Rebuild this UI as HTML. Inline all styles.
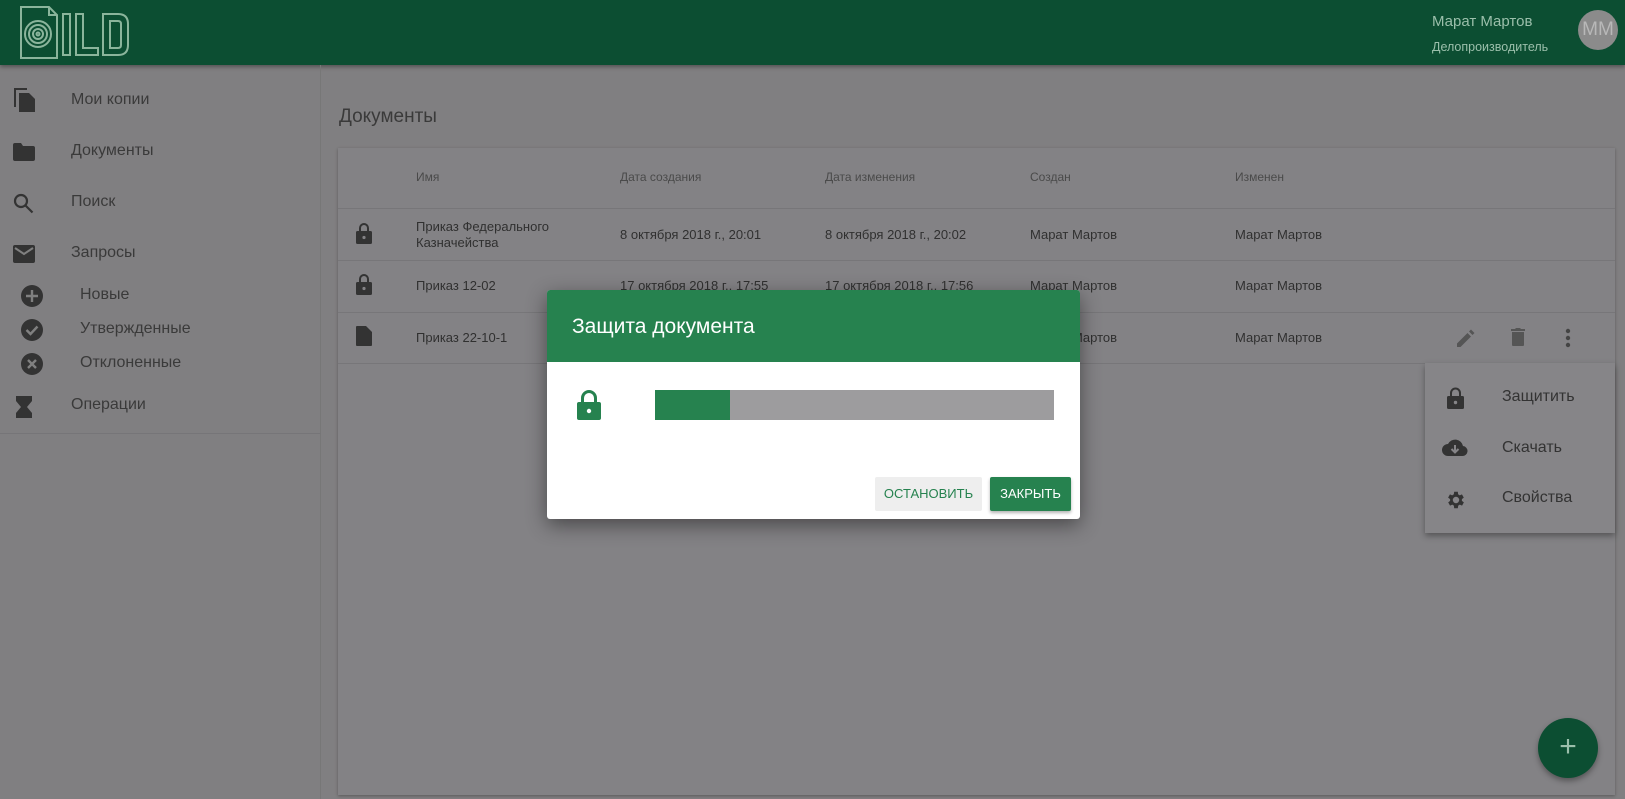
<!DOCTYPE html>
<html><head><meta charset="utf-8"><style>
*{margin:0;padding:0;box-sizing:border-box}
body{width:1625px;height:799px;overflow:hidden;background:#807f81;font-family:"Liberation Sans",sans-serif;position:relative;color:#333}
.hdr{position:absolute;left:0;top:0;width:1625px;height:65px;background:#0c4e32;box-shadow:0 2px 4px rgba(0,0,0,.35)}
.side{position:absolute;left:0;top:65px;width:321px;height:734px;border-right:1px solid #777}
.si{position:absolute;font-size:16px;color:#3a3a3a}
.ic{position:absolute}
.card{position:absolute;left:338px;top:148px;width:1277px;height:647px;background:#838285;box-shadow:0 1px 3px rgba(0,0,0,.3)}
.t{position:absolute;font-size:13px;color:#303030;white-space:nowrap}
.th{position:absolute;font-size:12px;color:#4a4a4a}
.ln{position:absolute;left:338px;width:1277px;height:1px;background:#777679}
.menu{position:absolute;left:1425px;top:363px;width:190px;height:170px;background:#868588;box-shadow:0 3px 6px rgba(0,0,0,.35)}
.mi{position:absolute;left:77px;font-size:16px;color:#333}
.dlg{position:absolute;left:547px;top:290px;width:533px;height:229px;background:#fff;border-radius:3px;box-shadow:0 6px 20px rgba(0,0,0,.45);overflow:hidden}
</style></head><body>
<div class="hdr">
<svg width="130" height="60" style="position:absolute;left:16px;top:4px" fill="none" stroke="#8bb59c" stroke-width="2">
<path d="M5 3h28l8 8v43H5z"/><path d="M33 3v8h8"/>
<circle cx="22" cy="30" r="13"/><circle cx="22" cy="30" r="9"/><circle cx="22" cy="30" r="5"/><circle cx="22" cy="30" r="1.5"/>
<path d="M47 10h7v41h-7z"/><path d="M60 10h7v34h15v7H60z"/><path d="M87 10h15q10 0 10 10v21q0 10-10 10H87z M94 17v27h8q3 0 3-3V20q0-3-3-3z"/>
</svg>
<div style="position:absolute;left:1432px;top:13px;font-size:15px;color:#9bbfab">Марат Мартов</div>
<div style="position:absolute;left:1432px;top:40px;font-size:12.5px;color:#9bbfab">Делопроизводитель</div>
<div style="position:absolute;left:1578px;top:10px;width:40px;height:40px;border-radius:50%;background:#8b8b8b;color:#b8b8b8;font-size:19px;line-height:40px;text-align:center">ММ</div>
</div>
<div class="side">
<svg class="ic" style="left:13px;top:23px" width="22" height="24" viewBox="0 0 22 24" fill="#333"><path d="M1 0h13v2H3v17H1z"/><path d="M6 5h10l6 6v13H6z"/></svg>
<div class="si" style="left:71px;top:26px">Мои копии</div>
<svg class="ic" style="left:13px;top:78px" width="22" height="18" fill="#333"><path d="M0 2q0-2 2-2h6l2 3h10q2 0 2 2v11q0 2-2 2H2q-2 0-2-2z"/></svg>
<div class="si" style="left:71px;top:77px">Документы</div>
<svg class="ic" style="left:13px;top:128px" width="22" height="22" fill="none" stroke="#333" stroke-width="2.2"><circle cx="8" cy="8" r="6"/><path d="M12.5 12.5l7 7"/></svg>
<div class="si" style="left:71px;top:128px">Поиск</div>
<svg class="ic" style="left:13px;top:180px" width="22" height="18"><rect width="22" height="18" rx="2" fill="#333"/><path d="M2 3l9 6 9-6" fill="none" stroke="#808080" stroke-width="2"/></svg>
<div class="si" style="left:71px;top:179px">Запросы</div>
<svg class="ic" style="left:21px;top:220px" width="22" height="22"><circle cx="11" cy="11" r="11" fill="#333"/><path d="M11 5v12M5 11h12" stroke="#808080" stroke-width="2.4"/></svg>
<div class="si" style="left:80px;top:221px">Новые</div>
<svg class="ic" style="left:21px;top:254px" width="22" height="22"><circle cx="11" cy="11" r="11" fill="#333"/><path d="M5.5 11l4 4 7-7.5" fill="none" stroke="#808080" stroke-width="2.4"/></svg>
<div class="si" style="left:80px;top:255px">Утвержденные</div>
<svg class="ic" style="left:21px;top:288px" width="22" height="22"><circle cx="11" cy="11" r="11" fill="#333"/><path d="M7 7l8 8M15 7l-8 8" stroke="#808080" stroke-width="2.4"/></svg>
<div class="si" style="left:80px;top:289px">Отклоненные</div>
<svg class="ic" style="left:16px;top:331px" width="16" height="22" fill="#333"><path d="M0 0h16v5l-5 6 5 6v5H0v-5l5-6-5-6z"/></svg>
<div class="si" style="left:71px;top:331px">Операции</div>
<div style="position:absolute;left:0;top:368px;width:321px;height:1px;background:#767578"></div>
</div>
<div style="position:absolute;left:339px;top:106px;font-size:19px;color:#3a3a3a">Документы</div>
<div class="card"></div>
<div class="th" style="left:416px;top:170px">Имя</div>
<div class="th" style="left:620px;top:170px">Дата создания</div>
<div class="th" style="left:825px;top:170px">Дата изменения</div>
<div class="th" style="left:1030px;top:170px">Создан</div>
<div class="th" style="left:1235px;top:170px">Изменен</div>
<div class="ln" style="top:208px"></div><div class="ln" style="top:260px"></div><div class="ln" style="top:312px"></div><div class="ln" style="top:363px"></div>
<svg class="ic" style="left:356px;top:222px" width="16" height="22" fill="#333"><path d="M3 9V6a5 5 0 0110 0v3h-2V6a3 3 0 00-6 0v3z"/><rect y="9" width="16" height="13" rx="1.5"/><circle cx="8" cy="15.5" r="1.6" fill="#838285"/></svg>
<div class="t" style="left:416px;top:219px;line-height:16px">Приказ Федерального<br>Казначейства</div>
<div class="t" style="left:620px;top:227px">8 октября 2018 г., 20:01</div>
<div class="t" style="left:825px;top:227px">8 октября 2018 г., 20:02</div>
<div class="t" style="left:1030px;top:227px">Марат Мартов</div>
<div class="t" style="left:1235px;top:227px">Марат Мартов</div>
<svg class="ic" style="left:356px;top:273px" width="16" height="22" fill="#333"><path d="M3 9V6a5 5 0 0110 0v3h-2V6a3 3 0 00-6 0v3z"/><rect y="9" width="16" height="13" rx="1.5"/><circle cx="8" cy="15.5" r="1.6" fill="#838285"/></svg>
<div class="t" style="left:416px;top:278px">Приказ 12-02</div>
<div class="t" style="left:620px;top:278px">17 октября 2018 г., 17:55</div>
<div class="t" style="left:825px;top:278px">17 октября 2018 г., 17:56</div>
<div class="t" style="left:1030px;top:278px">Марат Мартов</div>
<div class="t" style="left:1235px;top:278px">Марат Мартов</div>
<svg class="ic" style="left:356px;top:326px" width="16" height="20" fill="#333"><path d="M1 0h9l6 6v13q0 1-1 1H1q-1 0-1-1V1q0-1 1-1z"/></svg>
<div class="t" style="left:416px;top:330px">Приказ 22-10-1</div>
<div class="t" style="left:1030px;top:330px">Марат Мартов</div>
<div class="t" style="left:1235px;top:330px">Марат Мартов</div>
<svg class="ic" style="left:1457px;top:329px" width="18" height="18" fill="#555"><path d="M0 14.5V18h3.5L14 7.5 10.5 4z M15.5 6l2-2-3.5-3.5-2 2z"/></svg>
<svg class="ic" style="left:1511px;top:328px" width="14" height="18" fill="#555"><path d="M1 4h12v13q0 1-1 1H2q-1 0-1-1z M0 1h4l1-1h4l1 1h4v2H0z"/></svg>
<svg class="ic" style="left:1565px;top:328px" width="6" height="20" fill="#444"><circle cx="3" cy="3" r="2.2"/><circle cx="3" cy="10" r="2.2"/><circle cx="3" cy="17" r="2.2"/></svg>
<div class="menu">
<svg class="ic" style="left:22px;top:24px" width="17" height="22" fill="#333"><path d="M3 9V6a5.5 5.5 0 0111 0v3h-2V6a3.5 3.5 0 00-7 0v3z"/><rect y="9" width="17" height="13" rx="1.5"/><circle cx="8.5" cy="15.5" r="1.7" fill="#868588"/></svg>
<div class="mi" style="top:25px">Защитить</div>
<svg class="ic" style="left:17px;top:76px" width="26" height="18"><path d="M21 7A8 8 0 006 5 6 6 0 006 17h14a5 5 0 001-10z" fill="#333"/><path d="M13 6v7M9.5 10l3.5 3.5 3.5-3.5" fill="none" stroke="#868588" stroke-width="2"/></svg>
<div class="mi" style="top:76px">Скачать</div>
<svg class="ic" style="left:20px;top:126px" width="22" height="22" viewBox="0 0 24 24" fill="#333"><path d="M19.4 13a7.5 7.5 0 000-2l2.1-1.6-2-3.5-2.5 1a7 7 0 00-1.7-1L15 3h-4l-.4 2.9a7 7 0 00-1.7 1l-2.5-1-2 3.5L6.6 11a7.5 7.5 0 000 2l-2.1 1.6 2 3.5 2.5-1a7 7 0 001.7 1L11 21h4l.4-2.9a7 7 0 001.7-1l2.5 1 2-3.5zM13 15.5a3.5 3.5 0 110-7 3.5 3.5 0 010 7z" transform="translate(-1 0)"/></svg>
<div class="mi" style="top:126px">Свойства</div>
</div>
<div style="position:absolute;left:1538px;top:718px;width:60px;height:60px;border-radius:50%;background:#0c4e32;box-shadow:0 3px 6px rgba(0,0,0,.35);color:#9bbfab;font-size:30px;line-height:58px;text-align:center">+</div>
<div class="dlg">
<div style="height:72px;background:#26824f;color:#fff;font-size:21px;padding:25px 0 0 25px">Защита документа</div>
<svg class="ic" style="left:30px;top:100px" width="24" height="30" fill="#26824f"><path d="M4 12V8a8 8 0 0116 0v4h-3V8a5 5 0 00-10 0v4z"/><rect y="12" width="24" height="18" rx="2"/><circle cx="12" cy="21" r="2.2" fill="#fff"/></svg>
<div style="position:absolute;left:108px;top:100px;width:399px;height:30px;background:#9d9c9e"><div style="width:75px;height:30px;background:#26824f"></div></div>
<div style="position:absolute;left:328px;top:187px;width:107px;height:34px;background:#eeeeee;border-radius:2px;color:#26824f;font-size:13px;line-height:34px;text-align:center">ОСТАНОВИТЬ</div>
<div style="position:absolute;left:443px;top:187px;width:81px;height:34px;background:#26824f;border-radius:2px;color:#fff;font-size:13px;line-height:34px;text-align:center;box-shadow:0 2px 3px rgba(0,0,0,.3)">ЗАКРЫТЬ</div>
</div>
</body></html>
